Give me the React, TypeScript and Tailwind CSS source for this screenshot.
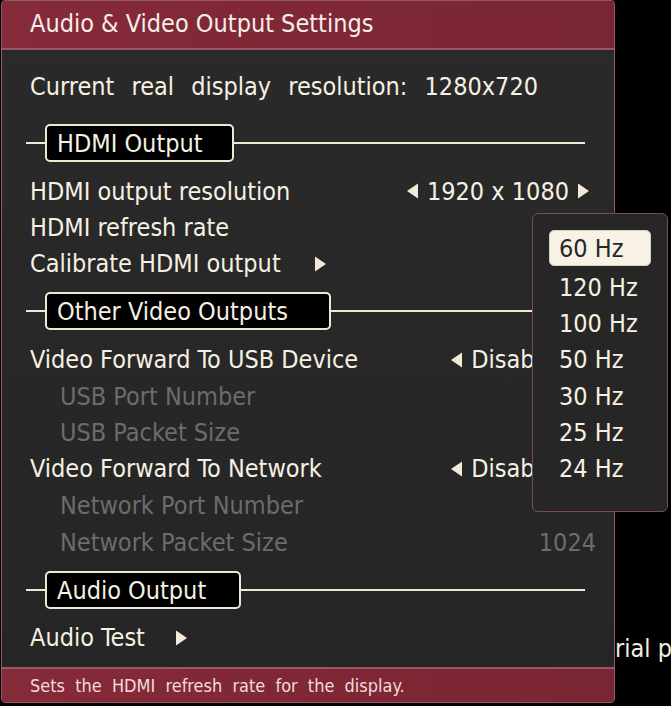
const font = '[font-family:"DejaVu_Sans_Condensed","DejaVu_Sans",sans-serif] [font-stretch:condensed]';

function ArrowLeft() {
  return (
    <svg width="13" height="18" viewBox="0 0 13 18" className="shrink-0 w-[13px] h-[18px]">
      <path d="M12 1.5 L1 9 L12 16.5 Z" fill="#f2ead6" />
    </svg>
  );
}

function ArrowRight() {
  return (
    <svg width="13" height="18" viewBox="0 0 13 18" className="shrink-0 w-[13px] h-[18px]">
      <path d="M1 1.5 L12 9 L1 16.5 Z" fill="#f2ead6" />
    </svg>
  );
}

function Section({ title, top, bottom, pr }: { title: string; top: string; bottom: string; pr: string }) {
  return (
    <div className={`flex items-center ml-[24px] w-[559px] ${top} ${bottom}`}>
      <div className="w-[19px] h-[2px] bg-[#efe8d4]" />
      <div className={`h-[38px] flex items-center pl-[10px] ${pr} bg-black border-2 border-[#efe8d4] rounded-[5px] text-[25px] text-[#f6f1e2] leading-none whitespace-nowrap`}>
        {title}
      </div>
      <div className="flex-1 h-[2px] bg-[#efe8d4]" />
    </div>
  );
}

function Row({
  label,
  h,
  sub,
  children,
}: {
  label: string;
  h: string;
  sub?: boolean;
  children?: React.ReactNode;
}) {
  return (
    <div className={`flex items-center ${h} ${sub ? 'pl-[58px] text-[#6c6c6c]' : 'pl-[28px] text-[#f6f1e2]'} pr-[24px] text-[25px] leading-none whitespace-nowrap`}>
      <span>{label}</span>
      {children}
    </div>
  );
}

function Choice({ value }: { value: string }) {
  return (
    <div className="ml-auto flex items-center gap-[8px] text-[#f6f1e2]">
      <ArrowLeft />
      <span>{value}</span>
      <ArrowRight />
    </div>
  );
}

const rates = ['120 Hz', '100 Hz', '50 Hz', '30 Hz', '25 Hz', '24 Hz'];

export default function App() {
  return (
    <div className={`relative w-[671px] h-[706px] bg-black overflow-hidden ${font}`}>
      <div className="absolute left-[615px] top-[636px] text-[25px] text-[#f4efe0] leading-none whitespace-nowrap">rial p</div>

      <div className="ml-[1px] w-[614px] h-[703px] flex flex-col border border-[#93566a] rounded-[4px] overflow-hidden bg-gradient-to-b from-[#2a2a2a] to-[#252525]">
        <div className="h-[49px] shrink-0 flex items-center pl-[28px] pb-[2px] bg-gradient-to-r from-[#852a39] to-[#7a2533] border-b-2 border-[#9c5565] text-[25px] text-[#f7eeea] leading-none whitespace-nowrap">
          Audio &amp; Video Output Settings
        </div>

        <div className="flex-1 flex flex-col">
          <div className="pt-[18px] h-[54px] flex items-center pl-[28px] text-[25px] text-[#f6f1e2] leading-none whitespace-nowrap [word-spacing:10px]">
            Current real display resolution: 1280x720
          </div>

          <Section title="HDMI Output" top="pt-[20px]" bottom="pb-[11px]" pr="pr-[29px]" />
          <Row label="HDMI output resolution" h="h-[36px]">
            <Choice value="1920 x 1080" />
          </Row>
          <Row label="HDMI refresh rate" h="h-[36px]" />
          <Row label="Calibrate HDMI output" h="h-[37px]">
            <span className="ml-[33px] flex"><ArrowRight /></span>
          </Row>

          <Section title="Other Video Outputs" top="pt-[10px]" bottom="pb-[11px]" pr="pr-[41px]" />
          <Row label="Video Forward To USB Device" h="h-[37px]">
            <Choice value="Disabled" />
          </Row>
          <Row label="USB Port Number" h="h-[36px]" sub />
          <Row label="USB Packet Size" h="h-[36px]" sub />
          <Row label="Video Forward To Network" h="h-[37px]">
            <Choice value="Disabled" />
          </Row>
          <Row label="Network Port Number" h="h-[37px]" sub />
          <Row label="Network Packet Size" h="h-[36px]" sub>
            <span className="ml-auto mr-[-6px]">1024</span>
          </Row>

          <Section title="Audio Output" top="pt-[11px]" bottom="pb-[11px]" pr="pr-[33px]" />
          <Row label="Audio Test" h="h-[35px]">
            <span className="ml-[30px] flex"><ArrowRight /></span>
          </Row>
        </div>

        <div className="h-[35px] shrink-0 flex items-center pl-[28px] pt-[1px] bg-gradient-to-r from-[#852a39] to-[#7a2533] border-t-2 border-[#9c5565] text-[18px] text-[#f1dcdc] leading-none whitespace-nowrap [word-spacing:5px]">
          Sets the HDMI refresh rate for the display.
        </div>
      </div>

      <div className="absolute left-[532px] top-[213px] w-[136px] h-[299px] bg-[#262626] border border-[#7d4a5a] rounded-[6px] pt-[16px] pl-[16px] text-[25px] leading-none">
        <div className="w-[102px] h-[36px] flex items-center pl-[9px] rounded-[5px] bg-[#f8f2e4] border border-[#d9cfbd] text-[#272727]">
          60 Hz
        </div>
        <div className="mt-[3px] flex flex-col">
          {rates.map((r) => (
            <div key={r} className="h-[36.3px] flex items-center pl-[10px] text-[#f6f1e2]">
              {r}
            </div>
          ))}
        </div>
      </div>
    </div>
  );
}
